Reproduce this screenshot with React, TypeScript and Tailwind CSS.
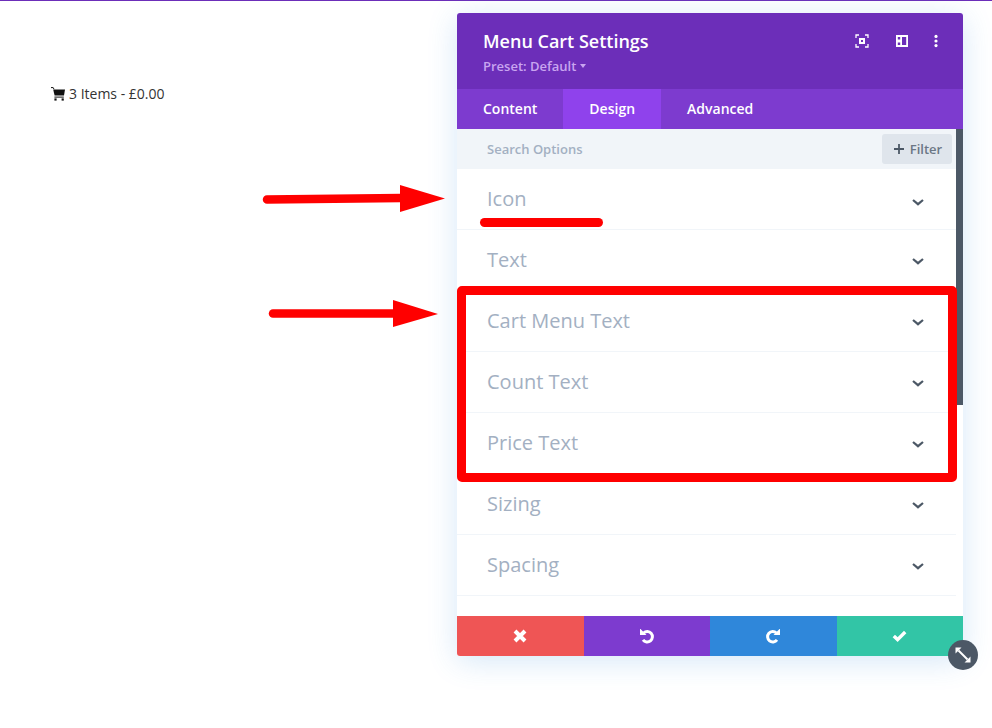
const rows = ["Icon", "Text", "Cart Menu Text", "Count Text", "Price Text", "Sizing", "Spacing"];

function Chevron({ className }: { className: string }) {
  return (
    <svg width="14" height="10" viewBox="0 0 14 10" className={"text-[#4c5866] " + className}>
      <path d="M2 3l5 4.2L12 3" fill="none" stroke="currentColor" strokeWidth="2.2" />
    </svg>
  );
}

function UndoIcon({ className }: { className?: string }) {
  return (
    <svg width="16" height="16" viewBox="0 0 16 16" className={className}>
      <path d="M4.6 5A5.2 5.2 0 1 1 4 11.8" fill="none" stroke="white" strokeWidth="3" />
      <path d="M1 1h0.5L7.5 7H1z" fill="white" />
    </svg>
  );
}

export default function App() {
  return (
    <div className="relative h-[728px] w-[992px] overflow-hidden bg-white font-['Open_Sans',sans-serif]">
      <div className="h-px bg-[#6c2eb9]" />

      {/* page content behind the modal */}
      <div className="ml-[51px] mt-[83px] flex items-center gap-1 text-[14px] leading-5 text-[#333]">
        <svg width="14" height="14" viewBox="0 0 14 14" className="text-[#111]">
          <path d="M0 0.6h2.2l0.8 1.6" fill="none" stroke="currentColor" strokeWidth="1" />
          <path d="M2.2 2.4H14l-1 6.2H3.6z" fill="currentColor" />
          <path d="M3.4 9.6h9.4v1H3.4z" fill="currentColor" />
          <rect x="3.4" y="11.4" width="2.2" height="2.2" fill="currentColor" />
          <rect x="10.6" y="11.4" width="2.2" height="2.2" fill="currentColor" />
        </svg>
        <span>3 Items - £0.00</span>
      </div>

      {/* settings modal */}
      <div className="absolute left-[457px] top-[13px] flex h-[643px] w-[506px] flex-col overflow-hidden rounded-[3px] bg-white shadow-[0_5px_30px_rgba(43,135,218,0.2)]">
        <div className="flex h-[76px] shrink-0 justify-between bg-[#6c2eb9] pl-[26px] pr-[25px] pt-[16px]">
          <div>
            <h1 className="text-[18px] font-semibold leading-6 text-white">Menu Cart Settings</h1>
            <div className="mt-[4px] flex items-center gap-1 text-[13px] font-semibold leading-[18px] text-[#c9a5f0]">
              Preset: Default
              <span className="h-0 w-0 border-x-[3px] border-t-[4px] border-x-transparent border-t-[#c9a5f0]" />
            </div>
          </div>
          <div className="mt-[5px] flex h-[14px] items-center gap-[26px] text-white">
            <svg width="14" height="14" viewBox="0 0 14 14" fill="none" stroke="currentColor" strokeWidth="1.3">
              <path d="M1 4V1h3M10 1h3v3M13 10v3h-3M4 13H1v-3" />
              <rect x="4" y="4" width="6" height="6" fill="currentColor" stroke="none" />
              <rect x="6" y="6" width="2" height="2" fill="#6c2eb9" stroke="none" />
            </svg>
            <svg width="14" height="14" viewBox="0 0 14 14">
              <path fillRule="evenodd" d="M1 1h12v12H1zM2.8 3v2.5h2.4V3zM2.8 8.5V11h2.4V8.5zM7 3v8h4.2V3z" fill="currentColor" />
            </svg>
            <svg width="4" height="14" viewBox="0 0 4 14" fill="currentColor" className="-ml-px">
              <circle cx="2" cy="2.4" r="1.6" />
              <circle cx="2" cy="7" r="1.6" />
              <circle cx="2" cy="11.6" r="1.6" />
            </svg>
          </div>
        </div>

        <div className="flex h-10 shrink-0 bg-[#7d3bcf] text-[14px] font-semibold leading-10 text-white">
          <div className="px-[26px]">Content</div>
          <div className="bg-[#8f42ec] px-[26px]">Design</div>
          <div className="px-[26px]">Advanced</div>
        </div>

        <div className="relative flex min-h-0 flex-1">
          <div className="min-w-0 flex-1">
            <div className="flex h-10 items-center justify-between bg-[#f1f5f9] pl-[30px] pr-[4px] text-[13px] font-semibold">
              <span className="pt-[2px] text-[#a3b0c2]">Search Options</span>
              <div className="flex h-[30px] w-[70px] items-center justify-center gap-[6px] rounded-[3px] bg-[#dfe5ec] pl-[2px] text-[#6b7785]">
                <svg width="10" height="10" viewBox="0 0 10 10" className="text-[#4c5866]">
                  <path d="M5 0v10M0 5h10" stroke="currentColor" strokeWidth="1.8" />
                </svg>
                <span className="pt-[2px]">Filter</span>
              </div>
            </div>
            {rows.map((row) => (
              <div
                key={row}
                className="flex h-[61px] items-center justify-between border-b border-[#f1f5f9] pl-[30px] pr-[31px] text-[20px] text-[#a3b0c2]"
              >
                <span>{row}</span>
                <Chevron className={row === "Icon" ? "mt-[5px]" : "mt-px"} />
              </div>
            ))}
          </div>
          <div className="w-[7px] shrink-0">
            <div className="h-[276px] bg-[#4c5866]" />
          </div>
        </div>

        <div className="grid h-10 shrink-0 grid-cols-4 text-white">
          <div className="flex items-center justify-center bg-[#ef5555]">
            <svg width="14" height="14" viewBox="0 0 14 14">
              <path d="M2 2l10 10M12 2L2 12" stroke="white" strokeWidth="4" />
            </svg>
          </div>
          <div className="flex items-center justify-center bg-[#7d3bcf]">
            <UndoIcon />
          </div>
          <div className="flex items-center justify-center bg-[#2f87da]">
            <UndoIcon className="-scale-x-100" />
          </div>
          <div className="flex items-center justify-center bg-[#32c5a6]">
            <svg width="15" height="12" viewBox="0 0 15 12">
              <path d="M1.8 6l3.8 3.6L13.2 2" fill="none" stroke="white" strokeWidth="3.4" />
            </svg>
          </div>
        </div>
      </div>

      {/* resize handle */}
      <div className="absolute left-[948px] top-[640px] flex h-[30px] w-[30px] items-center justify-center rounded-full bg-[#4c5866]">
        <svg width="18" height="18" viewBox="0 0 18 18" fill="white">
          <path d="M4.5 4.5l9 9" stroke="white" strokeWidth="2" />
          <path d="M1.5 1.5h6l-6 6zM16.5 16.5h-6l6-6z" />
        </svg>
      </div>

      {/* red annotations */}
      <svg width="190" height="30" viewBox="0 0 190 30" className="absolute left-[262px] top-[184px]">
        <path d="M5 15.5L139 14" stroke="#ff0000" strokeWidth="8.5" strokeLinecap="round" />
        <path d="M138 1v27l45-13.5z" fill="#ff0000" />
      </svg>
      <svg width="190" height="30" viewBox="0 0 190 30" className="absolute left-[268px] top-[299px]">
        <path d="M5 14.5H126" stroke="#ff0000" strokeWidth="8.5" strokeLinecap="round" />
        <path d="M125 1v27l45-13z" fill="#ff0000" />
      </svg>
      <div className="absolute left-[480px] top-[218px] h-[9px] w-[123px] rounded-full bg-[#ff0000]" />
      <div className="absolute left-[457px] top-[286px] h-[196px] w-[500px] rounded-[5px] border-[9px] border-[#ff0000]" />
    </div>
  );
}
